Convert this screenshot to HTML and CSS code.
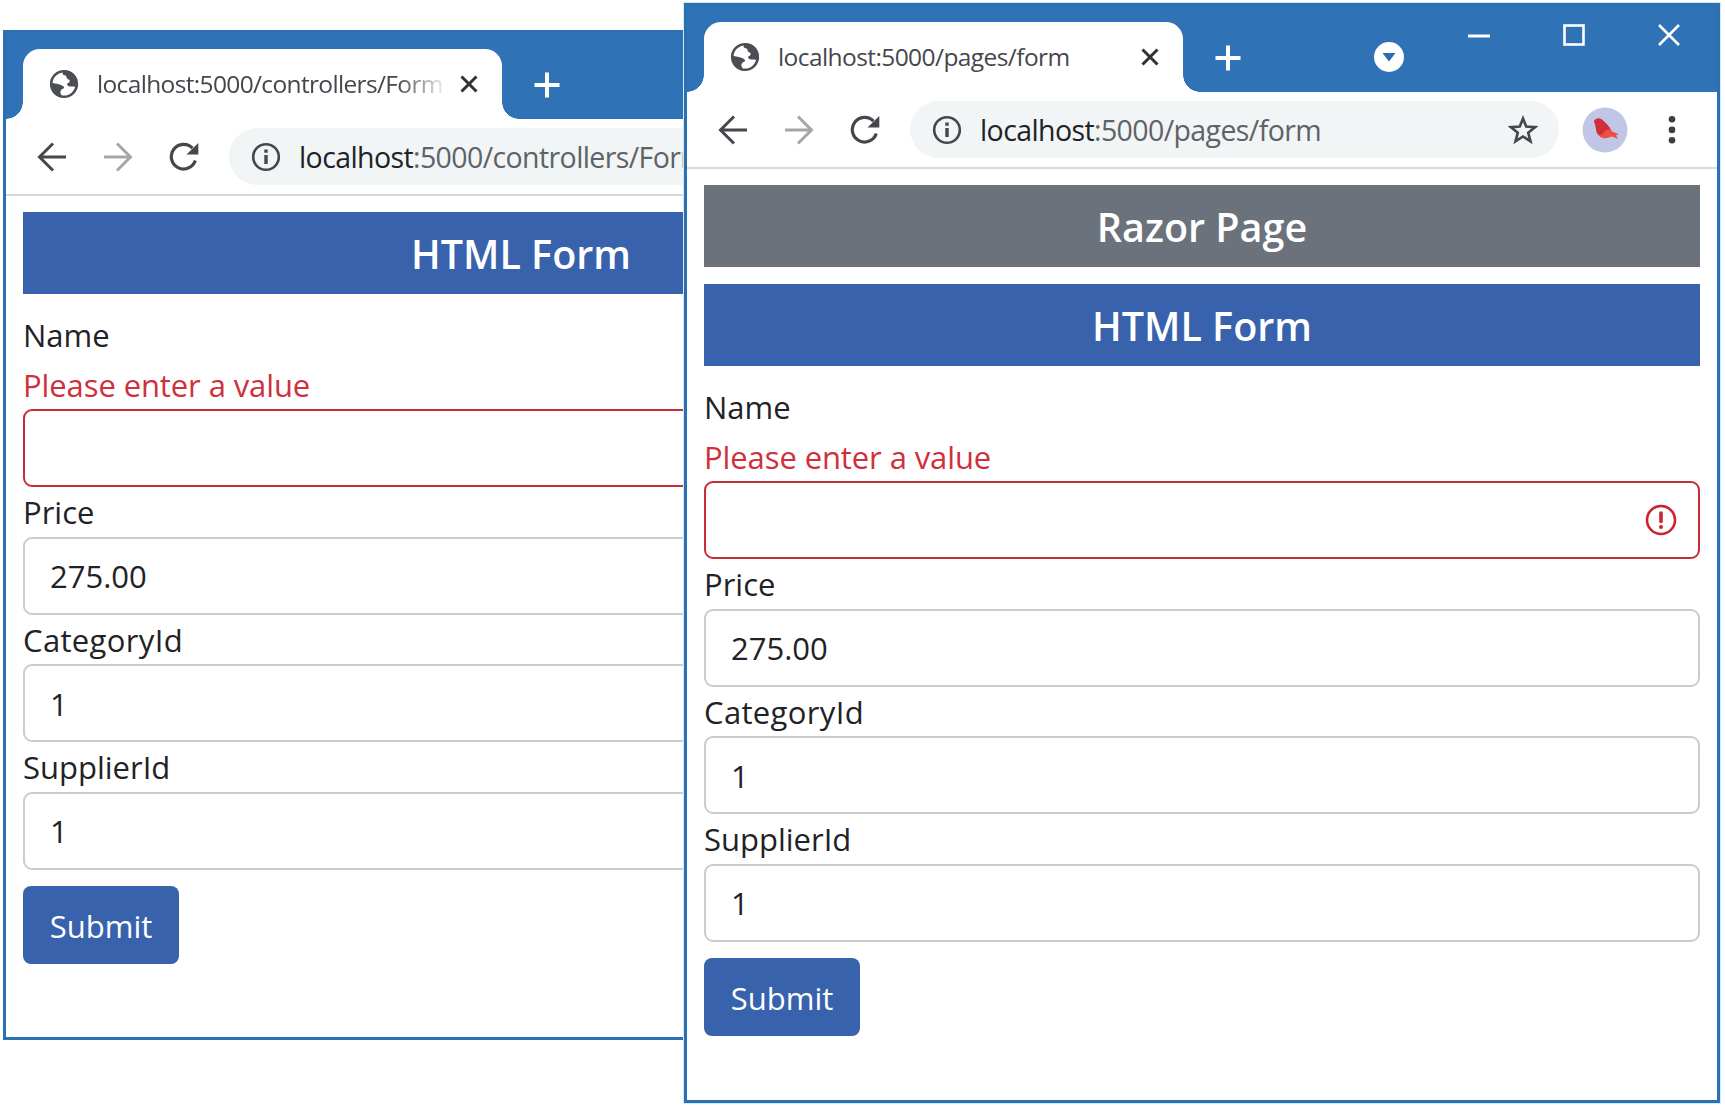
FILE: index.html
```html
<!DOCTYPE html>
<html lang="en">
<head>
<meta charset="utf-8">
<title>HTML Form</title>
<link rel="stylesheet" href="styles.css">
</head>
<body>
<svg class="defs" width="0" height="0">
  <symbol id="globe" viewBox="0 0 30 30"><circle cx="15" cy="15" r="12.8" fill="#fff" stroke="#4b4f54" stroke-width="2.6"/><path fill="#4b4f54" d="M16 1.500C12.500 4 13 6 16.500 6.500C18 7 17 9.500 19.500 10.500C21.500 11 21 13.500 18.500 14.500C16.500 15.500 20 18 22 17.500C25 17 26.500 18.500 28 18C30 9 24.500 1.500 16 1.500Z"/><path fill="#4b4f54" d="M2 13.500C6 15 9.500 14.500 12 16C14.500 17 16 18.500 14.500 19.500C12 20.500 11 22 11.500 24C12 26 13.500 26.500 13 28.500C6 27.500 1 21 2 13.500Z"/></symbol>
  <symbol id="cross" viewBox="0 0 18 18"><path d="M1.500 1.500L16.500 16.500M16.500 1.500L1.500 16.500" fill="none" stroke="#303236" stroke-width="3"/></symbol>
  <symbol id="plus" viewBox="0 0 26 26"><path d="M13 .5V25.500M.5 13H25.500" fill="none" stroke="#fff" stroke-width="4"/></symbol>
  <symbol id="back" viewBox="0 0 30 30"><path d="M29 15H3M16 1.500L2.500 15L16 28.500" fill="none" stroke="currentColor" stroke-width="3"/></symbol>
  <symbol id="reload" viewBox="0 0 30 30"><path d="M26.300 18.500A12.300 12.300 0 1 1 23.500 6.200" fill="none" stroke="#44474c" stroke-width="3.200"/><path d="M29.300 1V12.500H17.500Z" fill="#44474c"/></symbol>
  <symbol id="info" viewBox="0 0 30 30"><circle cx="15" cy="15" r="12.800" fill="none" stroke="#44474c" stroke-width="2.600"/><path d="M15 13V22M15 7.500V10.700" stroke="#44474c" stroke-width="3.400"/></symbol>
</svg>

<section class="window window-back">
  <header class="titlebar">
    <div class="tab">
      <svg class="i30"><use href="#globe"/></svg>
      <span class="tab-title tab-title-faded">localhost:5000/controllers/Form</span>
      <svg class="i18"><use href="#cross"/></svg>
    </div>
    <svg class="new-tab"><use href="#plus"/></svg>
  </header>
  <nav class="toolbar">
    <svg class="i30"><use href="#back"/></svg>
    <svg class="i30 forward"><use href="#back"/></svg>
    <svg class="i30"><use href="#reload"/></svg>
    <div class="address">
      <svg class="i30"><use href="#info"/></svg>
      <span class="url"><b>localhost</b>:5000/controllers/Form</span>
    </div>
  </nav>
  <main class="page">
    <h5 class="banner primary">HTML Form</h5>
    <form class="form">
      <label>Name</label>
      <span class="error">Please enter a value</span>
      <div class="input invalid"></div>
      <label>Price</label>
      <div class="input">275.00</div>
      <label class="wide">CategoryId</label>
      <div class="input">1</div>
      <label>SupplierId</label>
      <div class="input">1</div>
      <button class="submit" type="button">Submit</button>
    </form>
  </main>
</section>

<section class="window window-front">
  <header class="titlebar">
    <div class="tab">
      <svg class="i30"><use href="#globe"/></svg>
      <span class="tab-title">localhost:5000/pages/form</span>
      <svg class="i18"><use href="#cross"/></svg>
    </div>
    <svg class="new-tab"><use href="#plus"/></svg>
    <svg class="tab-search" viewBox="0 0 30 30"><circle cx="15" cy="15" r="15" fill="#fff"/><path d="M8.500 11H21.500L15 19.500Z" fill="#2b6cae"/></svg>
    <div class="controls">
      <svg viewBox="0 0 22 22"><path d="M0 12H22" stroke="#fff" stroke-width="3"/></svg>
      <svg viewBox="0 0 22 22"><rect x="1.500" y="1.500" width="19" height="19" fill="none" stroke="#fff" stroke-width="2.600"/></svg>
      <svg viewBox="0 0 22 22"><path d="M1 1L21 21M21 1L1 21" stroke="#fff" stroke-width="2.600"/></svg>
    </div>
  </header>
  <nav class="toolbar">
    <svg class="i30"><use href="#back"/></svg>
    <svg class="i30 forward"><use href="#back"/></svg>
    <svg class="i30"><use href="#reload"/></svg>
    <div class="address">
      <svg class="i30"><use href="#info"/></svg>
      <span class="url"><b>localhost</b>:5000/pages/form</span>
      <svg class="i30 star" viewBox="0 0 30 30"><path d="M15 3.500L18.200 11.600L27 12.200L20.200 17.700L22.500 26.300L15 21.500L7.500 26.300L9.800 17.700L3 12.200L11.800 11.600Z" fill="none" stroke="#44474c" stroke-width="2.600"/></svg>
    </div>
    <svg class="avatar" viewBox="0 0 46 46"><circle cx="23" cy="23" r="22.500" fill="#c0c7e6"/><path d="M12 14.500C13 11 18 10.500 21 13.500C25 17 28 20 30 24.500L36.500 27L34 28.500L36 32L30 29.500L27 30.500C22 32.500 17 30.500 15 26C13.500 22 14 18 12 14.500Z" fill="#ee5040"/><path d="M12 14.500C13 11 18 10.500 21 13.500C25 17 27 19.500 28.500 22.500C25 22 22 24 20.500 27.500C17.500 28.500 15.500 27 15 26C13.500 22 14 18 12 14.500Z" fill="#d12e3c"/></svg>
    <svg class="menu" viewBox="0 0 8 30"><g fill="#3c3e42"><circle cx="4" cy="4.300" r="3.300"/><circle cx="4" cy="14.900" r="3.300"/><circle cx="4" cy="25.200" r="3.300"/></g></svg>
  </nav>
  <main class="page">
    <h5 class="banner secondary">Razor Page</h5>
    <h5 class="banner primary">HTML Form</h5>
    <form class="form">
      <label>Name</label>
      <span class="error">Please enter a value</span>
      <div class="input invalid">
        <svg class="alert" viewBox="0 0 32 32"><circle cx="16" cy="16" r="14" fill="none" stroke="#cb2430" stroke-width="2.600"/><path d="M16 9V17.500" stroke="#cb2430" stroke-width="3.600" stroke-linecap="round"/><circle cx="16" cy="23" r="2" fill="#cb2430"/></svg>
      </div>
      <label>Price</label>
      <div class="input">275.00</div>
      <label class="wide">CategoryId</label>
      <div class="input">1</div>
      <label>SupplierId</label>
      <div class="input">1</div>
      <button class="submit" type="button">Submit</button>
    </form>
  </main>
</section>
</body>
</html>
```
FILE: styles.css
```css
* { box-sizing: border-box; }

body {
  margin: 0;
  height: 1109px;
  position: relative;
  overflow: hidden;
  background: #fff;
  color: #1f2226;
  font-family: "Open Sans", "Noto Sans", sans-serif;
}

svg { display: block; flex: none; }
.defs { position: absolute; }
.i30 { width: 30px; height: 30px; }
.i18 { width: 18px; height: 18px; }

/* Overlapping desktop windows */
.window {
  position: absolute;
  width: 1036px;
  background: #fff;
  border: 3px solid #2a70b2;
}
.window-back { left: 3px; top: 30px; height: 1010px; }
.window-front { left: 684px; top: 3px; height: 1100px; box-shadow: 0 0 0 1px #cfeaf8; }

/* Title bar */
.titlebar {
  display: flex;
  align-items: flex-end;
  height: 86px;
  padding-left: 17px;
  background: #2f72b5;
}
.tab {
  position: relative;
  display: flex;
  align-items: center;
  width: 479px;
  height: 70px;
  padding: 0 24px 0 26px;
  border-radius: 17px 17px 0 0;
  background: #fff;
}
.tab::before,
.tab::after {
  content: "";
  position: absolute;
  bottom: 0;
  width: 17px;
  height: 17px;
}
.tab::before { left: -17px; background: radial-gradient(circle at 0 0, transparent 16.5px, #fff 17px); }
.tab::after { right: -17px; background: radial-gradient(circle at 100% 0, transparent 16.5px, #fff 17px); }
.tab-title {
  flex: 1;
  margin: 0 14px 0 18px;
  padding-bottom: 2px;
  overflow: hidden;
  white-space: nowrap;
  font-size: 24.5px;
  letter-spacing: -0.58px;
  color: #45474d;
}
.tab-title-faded {
  letter-spacing: -0.65px;
  -webkit-mask-image: linear-gradient(to right, #000 300px, transparent 352px);
  mask-image: linear-gradient(to right, #000 300px, transparent 352px);
}
.new-tab { width: 26px; height: 26px; margin: 0 0 21px 32px; }
.tab-search { width: 30px; height: 30px; margin: 0 0 20px 133px; }
.controls {
  display: flex;
  gap: 73px;
  margin-left: 64px;
  align-self: flex-start;
  padding-top: 18px;
}
.controls svg { width: 22px; height: 22px; }

/* Toolbar */
.toolbar {
  display: flex;
  align-items: center;
  gap: 36px;
  height: 77px;
  padding: 0 0 0 31px;
  border-bottom: 2px solid #d9dadb;
  color: #44474c;
}
.forward { color: #a5a6a8; transform: scaleX(-1); }
.address {
  display: flex;
  align-items: center;
  width: 649px;
  height: 57px;
  margin-left: -6px;
  padding: 0 21px 0 22px;
  border-radius: 29px;
  background: #f1f5f5;
}
.url {
  flex: 1;
  margin-left: 18px;
  white-space: nowrap;
  font-size: 28.5px;
  letter-spacing: -0.6px;
  color: #5f6267;
}
.url b { font-weight: 400; color: #202226; }
.avatar { width: 46px; height: 46px; margin-left: -13px; }
.menu { width: 8px; height: 30px; margin-left: 4px; }

/* Page content */
.page { padding: 16px 17px 0; }
.banner {
  display: flex;
  align-items: center;
  justify-content: center;
  height: 82px;
  margin: 0 0 17px;
  padding-top: 2px;
  color: #fff;
  font-size: 39.5px;
  font-weight: 600;
}
.primary { background: #3862ac; margin-bottom: 16px; }
.secondary { background: #6b727c; }
.form { display: flex; flex-direction: column; font-size: 31px; }
.form label, .error { height: 49.500px; line-height: 50px; }
.form .wide { letter-spacing: 0.35px; }
.error { color: #d0303c; letter-spacing: -0.1px; }
.input {
  display: flex;
  align-items: center;
  height: 78px;
  padding: 1px 21px 0 25px;
  border: 2px solid #cbcccd;
  border-radius: 9px;
}
.invalid { border-color: #cb2b36; justify-content: flex-end; padding-top: 0; }
.alert { width: 32px; height: 32px; }
.submit {
  width: 156px;
  height: 78px;
  margin-top: 16.5px;
  padding: 1px 0 0;
  border: 0;
  border-radius: 8px;
  background: #3862ac;
  color: #fff;
  font: inherit;
}
```
